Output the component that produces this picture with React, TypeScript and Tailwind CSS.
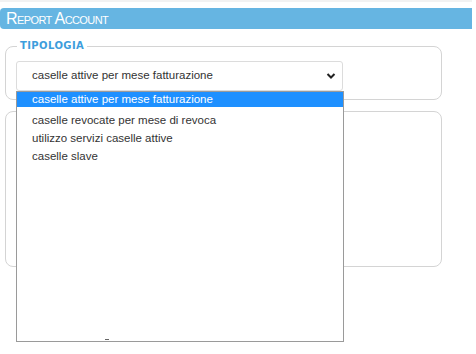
import React from "react";

export default function App() {
  const opts = [
    "caselle attive per mese fatturazione",
    "caselle revocate per mese di revoca",
    "utilizzo servizi caselle attive",
    "caselle slave",
  ];
  return (
    <div className="relative w-[476px] h-[354px] bg-white overflow-hidden" style={{ fontFamily: "'Liberation Sans', Arial, sans-serif" }}>
      <div className="h-[2px] w-[472px] bg-[#f2f2f2]" />
      <div className="mt-[6px] w-[472px] h-[21px] bg-[#66b5e2] rounded-l-[4px] flex items-center pl-[6px]">
        <span className="text-white text-[16px] [font-variant:small-caps] tracking-[-0.6px] leading-[16px]" style={{ fontFamily: "'Liberation Sans', Arial, sans-serif" }}>
          Report Account
        </span>
      </div>
      <div className="ml-[5px] mt-[12px] w-[437px]">
        <fieldset className="border border-[#d4d4d4] rounded-[8px] h-[59px] m-0 p-0 pl-[10px]">
          <legend className="ml-[1px] px-[3px] text-[10px] font-bold text-[#3d9ddc] tracking-[0.4px] leading-[10px]" style={{ fontFamily: "'DejaVu Sans', Verdana, sans-serif" }}>
            TIPOLOGIA
          </legend>
          <div className="mt-[10px] w-[327px] h-[30px] border border-[#dcdcdc] rounded-[3px] flex items-center justify-between pl-[15px] pr-[6px] text-[11.5px] text-[#333]">
            <span>caselle attive per mese fatturazione</span>
            <svg width="10" height="8" viewBox="0 0 10 8"><path d="M1.5 2 L5 5.5 L8.5 2" stroke="#222" strokeWidth="2" fill="none" /></svg>
          </div>
        </fieldset>
        <div className="mt-[11px] h-[156px] border border-[#d4d4d4] rounded-[8px]" />
      </div>
      <div className="absolute left-[16px] top-[91px] w-[328px] h-[251px] bg-white border border-[#9a9a9a] text-[11.5px] text-[#333]">
        <div className="h-[15px] bg-[#1e90ff] text-white pl-[15px] leading-[15px]">{opts[0]}</div>
        <div className="pt-[4px]">
          {opts.slice(1).map((o) => (
            <div key={o} className="pl-[15px] h-[18px] leading-[18px]">{o}</div>
          ))}
        </div>
        <div className="absolute left-[88px] bottom-[1px] w-[4px] h-[1px] bg-[#666]" />
      </div>
    </div>
  );
}
